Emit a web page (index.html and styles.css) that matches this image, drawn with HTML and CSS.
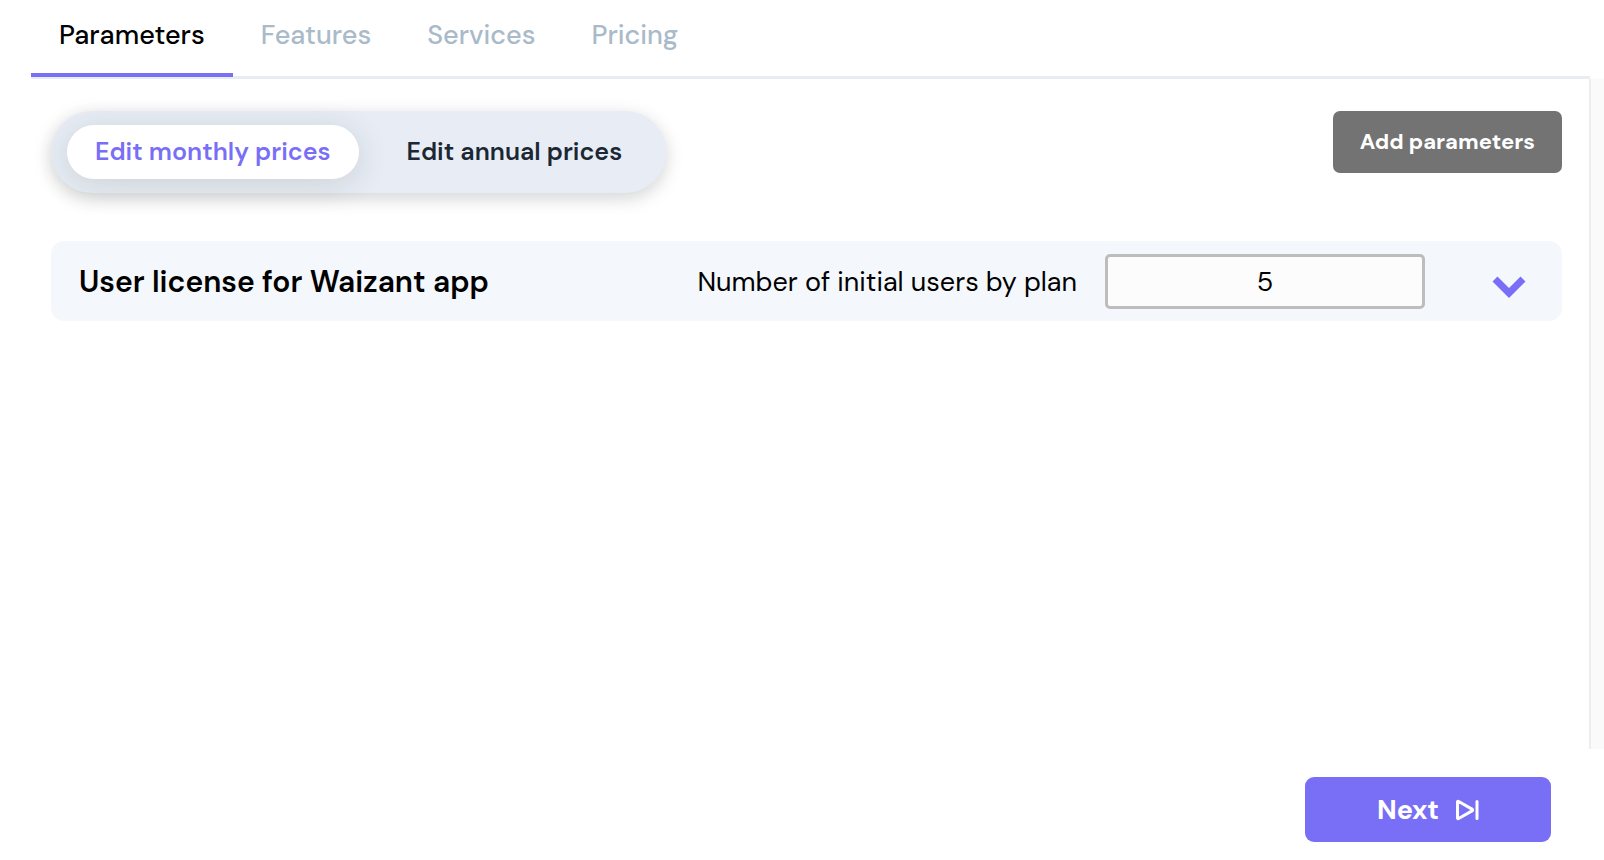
FILE: index.html
```html
<!DOCTYPE html>
<html lang="en">
<head>
  <meta charset="utf-8">
  <meta name="viewport" content="width=device-width, initial-scale=1">
  <title>Parameters</title>
  <link rel="stylesheet" href="styles.css">
</head>
<body>
  <div class="page">
    <nav class="tabs" aria-label="Sections">
      <a class="tab tab-active" href="#parameters" aria-current="page">Parameters</a>
      <a class="tab" href="#features">Features</a>
      <a class="tab" href="#services">Services</a>
      <a class="tab" href="#pricing">Pricing</a>
    </nav>
    <div class="body">
      <main class="panel">
        <div class="toolbar">
          <div class="toggle">
            <button class="toggle-option toggle-selected" type="button" aria-pressed="true">Edit monthly prices</button>
            <button class="toggle-option" type="button" aria-pressed="false">Edit annual prices</button>
          </div>
          <button class="add-button" type="button">Add parameters</button>
        </div>
        <section class="parameter">
          <h2 class="parameter-name">User license for Waizant app</h2>
          <label class="parameter-label" for="users">Number of initial users by plan</label>
          <input class="parameter-input" id="users" type="text" inputmode="numeric" value="5">
          <button class="expand" type="button" aria-label="Expand">
            <svg width="34" height="22" viewBox="0 0 34 22"><path d="M5.5 0.5 17 12 28.5 0.5 33.5 5.5 17 22 0.5 5.5Z" fill="#786ff6"/></svg>
          </button>
        </section>
      </main>
      <div class="scroll-track"></div>
    </div>
    <footer class="footer">
      <button class="next-button" type="button">
        <span>Next</span>
        <svg width="24" height="22" viewBox="0 0 24 22" fill="none" stroke="#fff" stroke-width="3" stroke-linecap="round" stroke-linejoin="round"><path d="M2.500 3.200v15.600q0 1.400 1.200.7L17 11.900q1.300-.9 0-1.800L3.700 2.500q-1.200-.7-1.200.7Z"/><path d="M22 2.400v17.200"/></svg>
      </button>
    </footer>
  </div>
</body>
</html>
```

FILE: styles.css
```css
* {
  box-sizing: border-box;
}

body {
  margin: 0;
  background: #fff;
  color: #000;
  font-family: "DM Sans", Inter, "Liberation Sans", sans-serif;
}

button,
input {
  font: inherit;
}

button {
  border: 0;
  cursor: pointer;
}

.page {
  display: flex;
  flex-direction: column;
  min-height: 100vh;
}

.tabs {
  display: flex;
  margin: 0 14px 0 31px;
  border-bottom: 3px solid #e8ecf3;
}

.tab {
  margin-bottom: -1px;
  padding: 19px 28px 22px;
  border-bottom: 4px solid transparent;
  color: #a9bac9;
  font-size: 27px;
  font-weight: 500;
  line-height: 32px;
  text-decoration: none;
}

.tab-active {
  border-color: #786ff6;
  color: #000;
}

.body {
  display: flex;
  flex: 1;
}

.panel {
  flex: 1;
  padding: 32px 27px 0 51px;
}

.toolbar {
  display: flex;
  align-items: flex-start;
  justify-content: space-between;
}

.toggle {
  display: flex;
  gap: 20px;
  padding: 14px 16px;
  border-radius: 41px;
  background: #e8edf5;
  box-shadow: 0 5px 18px rgba(0, 10, 10, 0.18);
}

.toggle-option {
  padding: 0 28px;
  border-radius: 27px;
  background: transparent;
  color: #1b2733;
  font-size: 25px;
  font-weight: 600;
  line-height: 54px;
}

.toggle-selected {
  background: #fff;
  box-shadow: 0 5px 32px rgba(20, 40, 30, 0.14);
  color: #786ff6;
}

.add-button {
  padding: 0 27px;
  border-radius: 7px;
  background: #737373;
  color: #fff;
  font-size: 22px;
  font-weight: 700;
  line-height: 62px;
}

.parameter {
  display: flex;
  align-items: center;
  height: 80px;
  margin-top: 48px;
  padding: 0 36px 0 28px;
  border-radius: 13px;
  background: #f4f8fc;
}

.parameter-name {
  flex: 1;
  margin: 0;
  font-size: 30px;
  font-weight: 600;
}

.parameter-label {
  font-size: 27px;
}

.parameter-input {
  width: 320px;
  height: 55px;
  margin: 0 67px 0 28px;
  border: 3px solid #bdbdbd;
  border-radius: 5px;
  background: #fcfcfc;
  font-size: 27px;
  text-align: center;
}

.expand {
  display: flex;
  padding: 12px 0 0;
  background: transparent;
}

.scroll-track {
  width: 15px;
  border-left: 2px solid #eee;
  background: #fafafa;
}

.footer {
  display: flex;
  justify-content: flex-end;
  padding: 28px 53px 18px;
}

.next-button {
  display: flex;
  align-items: center;
  justify-content: center;
  gap: 16px;
  width: 246px;
  height: 65px;
  border-radius: 9px;
  background: #786ff6;
  color: #fff;
  font-size: 27px;
  font-weight: 700;
}
```
